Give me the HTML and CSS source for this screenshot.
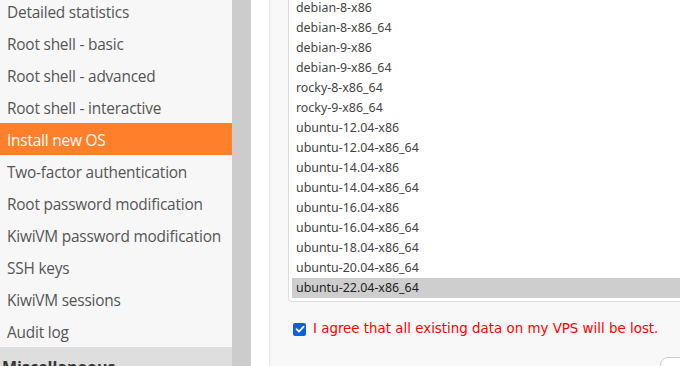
FILE: index.html
```html
<!DOCTYPE html>
<html>
<head>
<meta charset="utf-8">
<link rel="stylesheet" href="styles.css">
</head>
<body>
<div class="page">
  <aside class="sidebar">
    <ul class="menu">
      <li class="item">Detailed statistics</li>
      <li class="item">Root shell - basic</li>
      <li class="item">Root shell - advanced</li>
      <li class="item">Root shell - interactive</li>
      <li class="item active">Install new OS</li>
      <li class="item">Two-factor authentication</li>
      <li class="item">Root password modification</li>
      <li class="item">KiwiVM password modification</li>
      <li class="item">SSH keys</li>
      <li class="item">KiwiVM sessions</li>
      <li class="item">Audit log</li>
    </ul>
    <div class="section">Miscellaneous</div>
  </aside>
  <div class="gutter"></div>
  <div class="spacer"></div>
  <main class="panel">
    <ul class="oslist">
      <li class="os">debian-8-x86</li>
      <li class="os">debian-8-x86_64</li>
      <li class="os">debian-9-x86</li>
      <li class="os">debian-9-x86_64</li>
      <li class="os">rocky-8-x86_64</li>
      <li class="os">rocky-9-x86_64</li>
      <li class="os">ubuntu-12.04-x86</li>
      <li class="os">ubuntu-12.04-x86_64</li>
      <li class="os">ubuntu-14.04-x86</li>
      <li class="os">ubuntu-14.04-x86_64</li>
      <li class="os">ubuntu-16.04-x86</li>
      <li class="os">ubuntu-16.04-x86_64</li>
      <li class="os">ubuntu-18.04-x86_64</li>
      <li class="os">ubuntu-20.04-x86_64</li>
      <li class="os selected">ubuntu-22.04-x86_64</li>
    </ul>
    <label class="agree">
      <span class="check"><svg width="10" height="10" viewBox="0 0 10 10"><path d="M1.5 5.2 L4 7.6 L8.6 2.6" fill="none" stroke="#fff" stroke-width="1.8" stroke-linecap="round" stroke-linejoin="round"/></svg></span>
      <span class="agree-text">I agree that all existing data on my VPS will be lost.</span>
    </label>
    <div class="actions"><span class="btn"></span></div>
  </main>
</div>
</body>
</html>
```
FILE: styles.css
```css
html, body {
  margin: 0;
  padding: 0;
  background: #fff;
  overflow: hidden;
}
.page {
  display: flex;
  width: 680px;
  height: 366px;
  overflow: hidden;
}
.sidebar {
  width: 232px;
  flex: none;
  background: #dedede;
  font-family: "Open Sans", "Noto Sans", sans-serif;
}
.menu {
  list-style: none;
  margin: -5px 0 0 0;
  padding: 0;
  background: #f7f7f7;
}
.item {
  height: 32px;
  line-height: 32px;
  padding: 2px 0 0 7px;
  box-sizing: border-box;
  font-size: 15.4px;
  color: #555;
  white-space: nowrap;
  letter-spacing: -0.2px;
}
.item.active {
  background: #ff7f2a;
  color: #fff;
}
.section {
  padding: 10px 0 0 2px;
  font-weight: bold;
  font-size: 16px;
  color: #333;
  line-height: 20px;
}
.gutter {
  width: 19px;
  flex: none;
  background: #cccccc;
}
.spacer {
  width: 18px;
  flex: none;
  background: #fff;
  border-right: 1px solid #e6e6e6;
}
.panel {
  flex: 1;
  background: #f8f8f8;
  padding-left: 18px;
  display: flex;
  flex-direction: column;
}
.oslist {
  list-style: none;
  margin: -2px -20px 0 0;
  padding: 0 0 3px 3px;
  background: #fff;
  border: 1px solid #dcdcdc;
  border-top: none;
  border-radius: 0 0 0 4px;
  font-family: "Noto Sans", "Open Sans", sans-serif;
  font-size: 12.4px;
  color: #444;
}
.os {
  height: 20px;
  line-height: 20px;
  padding-left: 4px;
  white-space: nowrap;
}
.os.selected {
  background: #cecece;
  color: #222;
}
.agree {
  display: flex;
  align-items: center;
  margin-top: 19px;
  padding-left: 5px;
  gap: 7px;
}
.check {
  width: 13px;
  height: 13px;
  border-radius: 2px;
  background: #0b63d6;
  display: flex;
  align-items: center;
  justify-content: center;
}
.agree-text {
  font-family: "DejaVu Sans", sans-serif;
  font-size: 13.4px;
  color: #ff0000;
  line-height: 16px;
}
.actions {
  display: flex;
  justify-content: flex-end;
  margin-top: 20px;
}
.btn {
  width: 40px;
  height: 30px;
  margin-right: -22px;
  border: 1px solid #ccc;
  border-radius: 8px;
  background: #fff;
}
```
